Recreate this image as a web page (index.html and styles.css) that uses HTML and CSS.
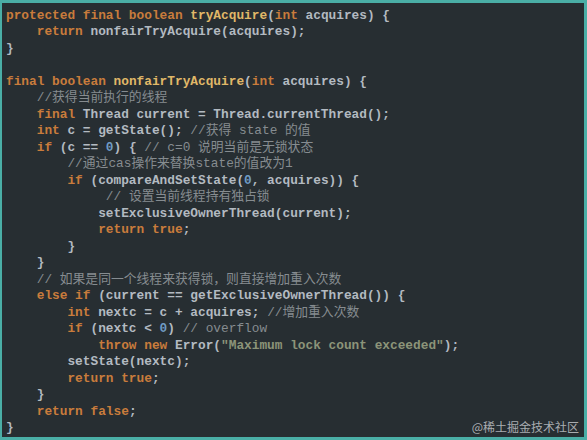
FILE: index.html
```html
<!DOCTYPE html>
<html lang="zh-CN">
<head>
<meta charset="utf-8">
<title>nonfairTryAcquire</title>
<link rel="stylesheet" href="styles.css">
</head>
<body>
<div class="frame">
<pre class="code"><span class="k">protected final boolean</span> <span class="m">tryAcquire</span>(<span class="k">int</span> acquires) {
    <span class="k">return</span> nonfairTryAcquire(acquires);
}

<span class="k">final boolean</span> <span class="m">nonfairTryAcquire</span>(<span class="k">int</span> acquires) {
    <span class="c">//获得当前执行的线程</span>
    <span class="k">final</span> Thread current = Thread.currentThread();
    <span class="k">int</span> c = getState(); <span class="c">//获得 state 的值</span>
    <span class="k">if</span> (c == <span class="n">0</span>) { <span class="c">// c=0 说明当前是无锁状态</span>
        <span class="c">//通过cas操作来替换state的值改为1</span>
        <span class="k">if</span> (compareAndSetState(<span class="n">0</span>, acquires)) {
             <span class="c">// 设置当前线程持有独占锁</span>
            setExclusiveOwnerThread(current);
            <span class="k">return true</span>;
        }
    }
    <span class="c">// 如果是同一个线程来获得锁，则直接增加重入次数</span>
    <span class="k">else if</span> (current == getExclusiveOwnerThread()) {
        <span class="k">int</span> nextc = c + acquires; <span class="c">//增加重入次数</span>
        <span class="k">if</span> (nextc &lt; <span class="n">0</span>) <span class="c">// overflow</span>
            <span class="k">throw new</span> Error(<span class="s">"Maximum lock count exceeded"</span>);
        setState(nextc);
        <span class="k">return true</span>;
    }
    <span class="k">return false</span>;
}</pre>
<div class="watermark">@稀土掘金技术社区</div>
</div>
</body>
</html>
```

FILE: styles.css
```css
html, body {
  margin: 0;
  padding: 0;
  background: #272e32;
}

.frame {
  position: relative;
  box-sizing: border-box;
  width: 587px;
  height: 440px;
  background: #272e32;
  border-style: solid;
  border-color: #4aaea6;
  border-width: 3px 3px 3px 2px;
  overflow: hidden;
}

.code {
  margin: 0;
  padding: 5px 0 0 4px;
  font-family: "Liberation Mono", "Noto Sans CJK SC", monospace;
  font-size: 12.8px;
  line-height: 16.48px;
  font-weight: bold;
  color: #b3bac1;
  white-space: pre;
}

.k { color: #c97c3c; }
.m { color: #e0b868; }
.n { color: #6f9bc4; }
.c { color: #868c90; font-weight: normal; }
.s { color: #8c9479; }

.watermark {
  position: absolute;
  right: 5px;
  bottom: 2px;
  font-family: "Noto Sans CJK SC", sans-serif;
  font-size: 12px;
  line-height: 16px;
  color: rgba(205, 208, 212, 0.8);
}
```
